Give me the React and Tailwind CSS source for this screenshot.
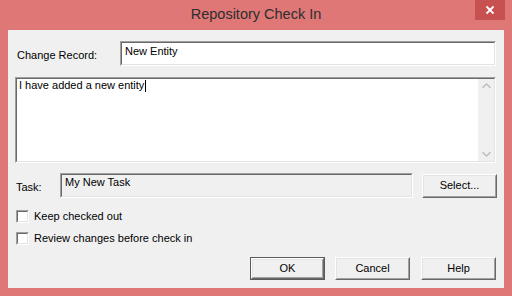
import React from 'react';

const font = { fontFamily: '"Liberation Sans", Arial, sans-serif' };

function Sunken({ className = '', innerClass = '', children }) {
  return (
    <div className={`border border-t-[#a0a0a0] border-l-[#a0a0a0] border-b-white border-r-white ${className}`}>
      <div className={`h-full border border-t-[#696969] border-l-[#696969] border-b-[#e3e3e3] border-r-[#e3e3e3] ${innerClass}`}>
        {children}
      </div>
    </div>
  );
}

function Button({ label, isDefault, className = '' }) {
  const face = (
    <div className="h-full border border-t-white border-l-white border-b-[#696969] border-r-[#696969]">
      <div className="h-full flex items-center justify-center border border-t-[#e3e3e3] border-l-[#e3e3e3] border-b-[#a0a0a0] border-r-[#a0a0a0] bg-[#f0f0f0] text-[11px] leading-[13px] text-black">
        {label}
      </div>
    </div>
  );
  if (isDefault) {
    return <div className={`border border-[#5a5a5a] ${className}`}>{face}</div>;
  }
  return <div className={className}>{face}</div>;
}

function Checkbox({ label }) {
  return (
    <div className="flex items-center h-[13px]">
      <div className="w-[13px] h-[13px] border border-t-[#a0a0a0] border-l-[#a0a0a0] border-b-white border-r-white">
        <div className="h-full border border-t-[#696969] border-l-[#696969] border-b-[#e3e3e3] border-r-[#e3e3e3] bg-white" />
      </div>
      <span className="ml-[5px] text-[11px] leading-[13px] text-black">{label}</span>
    </div>
  );
}

export default function App() {
  return (
    <div style={font} className="w-[512px] h-[296px] bg-[#df7777] flex flex-col overflow-hidden">
      {/* title bar */}
      <div className="relative h-[30px] flex items-center justify-center">
        <span className="text-[14.5px] text-[#2e2e2e] -mt-[1px]">Repository Check In</span>
        <div className="absolute top-0 right-[7px] w-[30px] h-[20px] bg-[#c75050] flex items-center justify-center">
          <svg width="10" height="10" viewBox="0 0 10 10">
            <path d="M1.5 1.5 L8.5 8.5 M8.5 1.5 L1.5 8.5" stroke="white" strokeWidth="1.8" />
          </svg>
        </div>
      </div>

      {/* client */}
      <div className="mx-[8px] h-[258px] bg-[#f0f0f0] flex flex-col px-[7px] pt-[11px]">
        <div className="flex items-center h-[25px]">
          <span className="w-[105px] pl-[2px] mt-[3px] text-[11px] leading-[13px] text-black">Change Record:</span>
          <Sunken className="flex-1 h-[25px] mr-[1px]" innerClass="bg-white px-[3px] pt-[2px]">
            <span className="block text-[11px] leading-[13px] text-black">New Entity</span>
          </Sunken>
        </div>

        <Sunken className="mt-[11px] h-[86px] mr-[1px]" innerClass="bg-white flex">
          <div className="flex-1 px-[2px] text-[11px] leading-[13px] text-black flex items-start">
            <span>I have added a new entity</span>
            <span className="ml-[1px] mt-[1px] w-[1px] h-[12px] bg-black" />
          </div>
          <div className="w-[16px] h-full bg-[#f0f0f0] flex flex-col justify-between items-center py-[4px]">
            <svg width="9" height="6" viewBox="0 0 9 6">
              <path d="M0.5 5 L4.5 1 L8.5 5" stroke="#c2c2c2" strokeWidth="1.6" fill="none" />
            </svg>
            <svg width="9" height="6" viewBox="0 0 9 6">
              <path d="M0.5 1 L4.5 5 L8.5 1" stroke="#c2c2c2" strokeWidth="1.6" fill="none" />
            </svg>
          </div>
        </Sunken>

        <div className="mt-[10px] flex items-center h-[25px]">
          <span className="w-[45px] pl-[1px] mt-[3px] text-[11px] leading-[13px] text-black">Task:</span>
          <Sunken className="w-[353px] h-[25px]" innerClass="bg-[#f0f0f0] px-[3px] pt-[1px]">
            <span className="block text-[11px] leading-[13px] text-black">My New Task</span>
          </Sunken>
          <Button label="Select..." className="ml-[9px] w-[75px] h-[24px]" />
        </div>

        <div className="mt-[12px] pl-[1px] flex flex-col gap-[9px]">
          <Checkbox label="Keep checked out" />
          <Checkbox label="Review changes before check in" />
        </div>

        <div className="mt-[12px] flex justify-end pr-[1px]">
          <Button label="OK" isDefault className="w-[75px] h-[23px]" />
          <Button label="Cancel" className="ml-[10px] w-[75px] h-[23px]" />
          <Button label="Help" className="ml-[11px] w-[75px] h-[23px]" />
        </div>
      </div>
    </div>
  );
}
